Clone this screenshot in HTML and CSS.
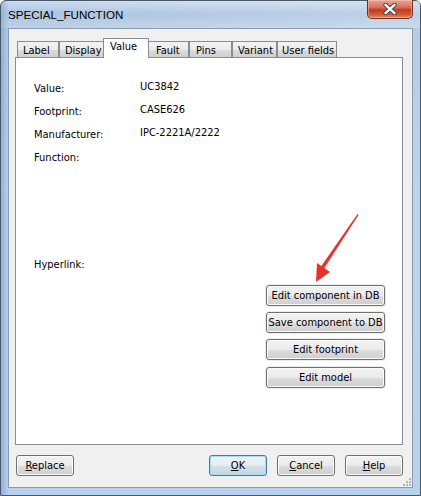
FILE: index.html
```html
<!DOCTYPE html>
<html>
<head>
<meta charset="utf-8">
<link rel="stylesheet" href="styles.css">
</head>
<body>
<div class="window">
  <div class="titlebar">
    <span class="title">SPECIAL_FUNCTION</span>
    <div class="close">
      <svg width="20" height="12" viewBox="0 0 20 12">
        <path d="M5.5 1.8 L14.5 10.2 M14.5 1.8 L5.5 10.2" stroke="#3a3a3a" stroke-width="4.2" stroke-linecap="round"/>
        <path d="M5.5 1.8 L14.5 10.2 M14.5 1.8 L5.5 10.2" stroke="#ffffff" stroke-width="2.4" stroke-linecap="round"/>
      </svg>
    </div>
  </div>
  <div class="client">
    <div class="tabs">
      <div class="tab t1">Label</div>
      <div class="tab t2">Display</div>
      <div class="tab active">Value</div>
      <div class="tab t4">Fault</div>
      <div class="tab t5">Pins</div>
      <div class="tab t6">Variant</div>
      <div class="tab t7">User fields</div>
    </div>
    <div class="panel">
      <div class="fields">
        <div class="lbl">Value:</div><div class="val">UC3842</div>
        <div class="lbl">Footprint:</div><div class="val">CASE626</div>
        <div class="lbl">Manufacturer:</div><div class="val">IPC-2221A/2222</div>
        <div class="lbl">Function:</div><div class="val"></div>
      </div>
      <div class="hyper">Hyperlink:</div>
      <div class="actions">
        <button class="btn wide">Edit component in DB</button>
        <button class="btn wide">Save component to DB</button>
        <button class="btn wide">Edit footprint</button>
        <button class="btn wide last">Edit model</button>
      </div>
    </div>
    <div class="footer">
      <button class="btn foot"><u>R</u>eplace</button>
      <div class="spacer"></div>
      <button class="btn foot default"><u>O</u>K</button>
      <button class="btn foot gap11"><u>C</u>ancel</button>
      <button class="btn foot"><u>H</u>elp</button>
    </div>
    <div class="grip">
      <svg width="10" height="10" viewBox="0 0 10 10">
        <g fill="#b4b4b4">
          <rect x="7" y="1" width="2" height="2"/>
          <rect x="4" y="4" width="2" height="2"/><rect x="7" y="4" width="2" height="2"/>
          <rect x="1" y="7" width="2" height="2"/><rect x="4" y="7" width="2" height="2"/><rect x="7" y="7" width="2" height="2"/>
        </g>
      </svg>
    </div>
  </div>
  <svg class="arrow" width="421" height="496" viewBox="0 0 421 496">
    <path d="M357.5 214 L358.5 215 L324 268.5 L321 266.5 Z" fill="#e8302c"/>
    <path d="M316 282 L317 263 L330 272 Z" fill="#e8302c"/>
  </svg>
</div>
</body>
</html>
```

FILE: styles.css
```css
html, body {
  margin: 0;
  padding: 0;
}
body {
  width: 421px;
  height: 496px;
  overflow: hidden;
  font-family: "DejaVu Sans Condensed", "DejaVu Sans", sans-serif;
  font-stretch: condensed;
  font-size: 11px;
  color: #000;
}
.window {
  position: relative;
  width: 421px;
  height: 496px;
  box-sizing: border-box;
  border: 1px solid #4a5766;
  border-radius: 6px 6px 0 0;
  background:
    linear-gradient(90deg, rgba(110,150,200,0.55) 0px, rgba(190,215,240,0.2) 8px, rgba(0,0,0,0) 12px),
    linear-gradient(180deg, #c4d9ef 0px, #a2bcd9 13px, #b4cce6 27px, #bcd5ef 200px, #b8d2ee 496px);
  display: flex;
  flex-direction: column;
}
.titlebar {
  height: 27px;
  display: flex;
  align-items: flex-start;
  position: relative;
  background: linear-gradient(90deg, rgba(255,255,255,0.1) 0, rgba(255,255,255,0.2) 50%, rgba(255,255,255,0.3) 100%);
}
.title {
  font-family: "Liberation Sans", Arial, sans-serif;
  font-stretch: normal;
  font-size: 11.6px;
  margin: 7px 0 0 7px;
  color: #000;
}
.close {
  position: absolute;
  top: -1px;
  right: 7px;
  width: 46px;
  height: 19px;
  box-sizing: border-box;
  border: 1px solid #6b2b1f;
  border-top: none;
  border-radius: 0 0 5px 5px;
  background: linear-gradient(180deg, #e9a593 0%, #d7735b 40%, #c43c1c 55%, #cf5a34 80%, #e4896a 100%);
  box-shadow: inset 0 0 0 1px rgba(255,210,200,0.45);
  display: flex;
  align-items: center;
  justify-content: center;
}
.client {
  position: relative;
  margin: 0 7px 7px 7px;
  flex: 1;
  background: #f0f0f0;
  border: 1px solid #8a9bb0;
  display: flex;
  flex-direction: column;
  padding: 9px 9px 0 6px;
}
.tabs {
  display: flex;
  align-items: flex-end;
  height: 19px;
  padding-left: 2px;
  position: relative;
  z-index: 2;
}
.tab {
  flex: none;
  min-width: 0;
  height: 16px;
  box-sizing: border-box;
  border: 1px solid #898c95;
  border-bottom: none;
  margin: 0;
  padding: 2px 0 0 5px;
  background: linear-gradient(180deg, #f3f3f3 0%, #ebebeb 50%, #dddddd 51%, #cfcfcf 100%);
  line-height: 13px;
  white-space: nowrap;
  overflow: visible;
}
.t1 { width: 42px; }
.t2 { width: 45px; }
.tab.active {
  position: relative;
  z-index: 1;
  height: 20px;
  width: 46px;
  background: #fff;
  margin: 0 0 -1px -1px;
  padding-top: 1px;
  padding-left: 6px;
}
.t4 { width: 41px; margin-left: -1px; padding-left: 7px; }
.t5 { width: 43px; margin-left: 0; padding-left: 6px; }
.t6 { width: 45px; }
.t7 { width: 60px; padding-left: 4px; }
.panel {
  height: 388px;
  box-sizing: border-box;
  background: #fff;
  border: 1px solid #898c95;
  display: flex;
  flex-direction: column;
  padding: 18px 17px 0 18px;
}
.fields {
  display: grid;
  grid-template-columns: 106px 1fr;
  grid-auto-rows: 23px;
  align-items: center;
}
.lbl, .val {
  line-height: 13px;
}
.lbl { padding-top: 2px; }
.val { padding-bottom: 2px; }
.hyper {
  margin-top: 90px;
  line-height: 13px;
}
.actions {
  display: flex;
  flex-direction: column;
  align-items: flex-end;
  gap: 6px;
  margin-top: 14px;
}
.btn {
  font-family: "DejaVu Sans Condensed", "DejaVu Sans", sans-serif;
  font-stretch: condensed;
  font-size: 11px;
  color: #000;
  height: 21px;
  box-sizing: border-box;
  border: 1px solid #707070;
  border-radius: 3px;
  background: linear-gradient(180deg, #f2f2f2 0%, #ebebeb 50%, #dddddd 51%, #cfcfcf 100%);
  box-shadow: inset 0 0 0 1px #fbfbfb, 0 0 0 1px #ececec;
  padding: 0;
  line-height: 18px;
  text-align: center;
  white-space: nowrap;
}
.btn.wide {
  width: 119px;
}
.btn.last { margin-top: 1px; }
.footer {
  display: flex;
  align-items: center;
  height: 21px;
  margin-top: 10px;
  padding-left: 1px;
}
.spacer { flex: 1; }
.btn.foot {
  width: 58px;
  box-shadow: inset 0 0 0 1px #fbfbfb;
}
.btn.foot + .btn.foot { margin-left: 10px; }
.btn.foot.gap11 { margin-left: 11px; }
.btn.default {
  border-color: #3c7fb1;
  box-shadow: inset 0 0 0 1px #a6dff5;
  background: linear-gradient(180deg, #eef4f8 0%, #e6edf2 50%, #d6e0e8 51%, #c9d5de 100%);
}
.btn u { text-decoration-thickness: 1px; text-underline-offset: 1px; }
.grip {
  position: absolute;
  right: 0;
  bottom: 0;
  width: 10px;
  height: 10px;
}
.grip svg { display: block; }
.arrow {
  position: absolute;
  left: -1px;
  top: -1px;
  pointer-events: none;
}
```
